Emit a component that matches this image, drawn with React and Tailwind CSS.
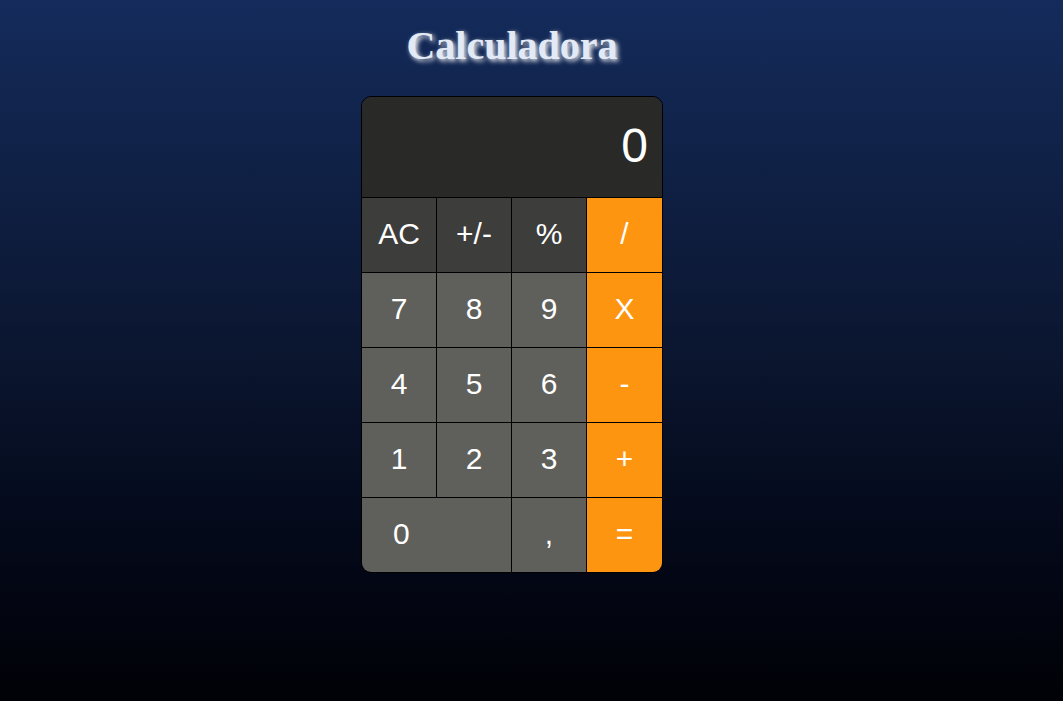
const rows = [
  [
    { label: 'AC', kind: 'fn' },
    { label: '+/-', kind: 'fn' },
    { label: '%', kind: 'fn' },
    { label: '/', kind: 'op' },
  ],
  [
    { label: '7' },
    { label: '8' },
    { label: '9' },
    { label: 'X', kind: 'op' },
  ],
  [
    { label: '4' },
    { label: '5' },
    { label: '6' },
    { label: '-', kind: 'op' },
  ],
  [
    { label: '1' },
    { label: '2' },
    { label: '3' },
    { label: '+', kind: 'op' },
  ],
];

function Key({ label, kind, last }) {
  const bg =
    kind === 'op' ? 'bg-[#fe9510]' : kind === 'fn' ? 'bg-[#3d3d3b]' : 'bg-[#5f5f5c]';
  return (
    <button
      type="button"
      className={`${bg} h-[75px] border-t border-black ${last ? '' : 'border-r'} flex items-center justify-center pb-[3px] text-white text-[30px]`}
    >
      {label}
    </button>
  );
}

export default function App() {
  return (
    <div
      className="min-h-screen w-full bg-gradient-to-b from-[#142b5b] via-[#0b1630] to-[#010207] flex flex-col items-center pr-[39px] pt-[26px]"
      style={{ fontFamily: '"Liberation Sans", Arial, sans-serif' }}
    >
      <h1
        className="text-[40px] leading-none font-bold text-[#e3eaf5] mb-[30px] [text-shadow:2px_2px_5px_#ffffff]"
        style={{ fontFamily: '"Liberation Serif", "Times New Roman", serif' }}
      >
        Calculadora
      </h1>

      <div className="w-[302px] border border-black rounded-[10px] overflow-hidden">
        <div className="h-[100px] bg-[#292927] flex items-center justify-end pr-[14px] pb-[2px] text-white text-[48px]">
          0
        </div>
        <div className="grid grid-cols-4">
          {rows.map((row, i) =>
            row.map((k, j) => <Key key={`${i}-${j}`} {...k} last={j === 3} />)
          )}
          <button
            type="button"
            className="col-span-2 bg-[#5f5f5c] h-[75px] border-t border-r border-black flex items-center pl-[31px] pb-[3px] text-white text-[30px]"
          >
            0
          </button>
          <Key label="," />
          <Key label="=" kind="op" last />
        </div>
      </div>
    </div>
  );
}
